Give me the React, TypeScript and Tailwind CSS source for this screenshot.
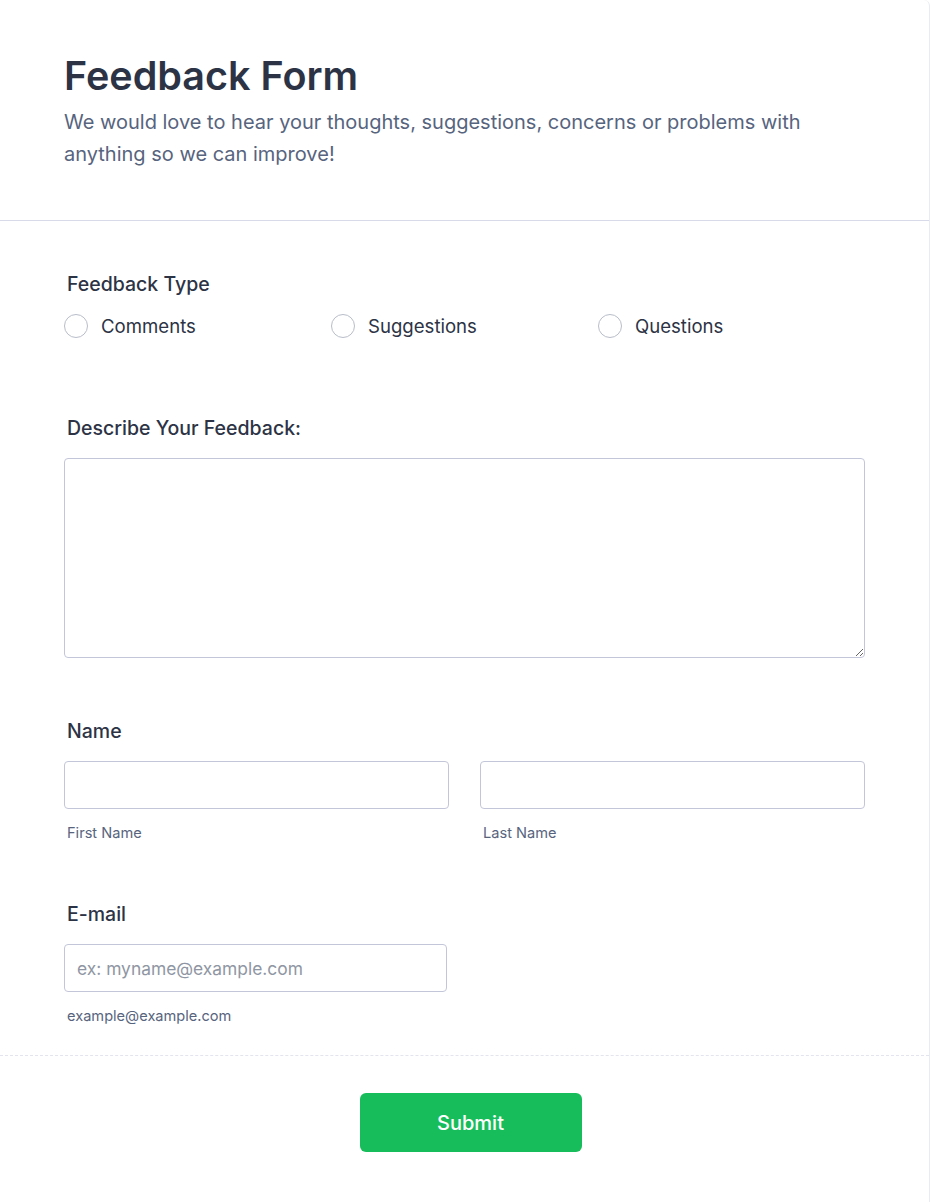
import React from 'react';

const font = { fontFamily: 'Inter, "Noto Sans", Arial, sans-serif' };

const feedbackTypes = ['Comments', 'Suggestions', 'Questions'];

function Label({ children, className = '' }: { children: React.ReactNode; className?: string }) {
  return (
    <div className={`pl-[3px] text-[19.5px] leading-6 font-medium text-[#2c3345] ${className}`}>
      {children}
    </div>
  );
}

function SubLabel({ children }: { children: React.ReactNode }) {
  return <div className="mt-[14px] pl-[3px] text-[14.6px] leading-5 text-[#57647e]">{children}</div>;
}

export default function App() {
  return (
    <div style={font} className="min-h-[1202px] w-full bg-white border-r border-[#e9ebf2] rounded-tr-md">
      {/* Header */}
      <div className="px-16 pt-[52px] pb-[50px] border-b border-[#d8dae9]">
        <h1 className="text-[39.5px] leading-[48px] font-semibold text-[#2c3345]">Feedback Form</h1>
        <p className="mt-[6px] text-[20px] leading-8 text-[#57647e]">
          We would love to hear your thoughts, suggestions, concerns or problems with anything so we can improve!
        </p>
      </div>

      <div className="px-16 pt-[51px]">
        {/* Feedback type */}
        <Label>Feedback Type</Label>
        <div className="mt-[18px] grid grid-cols-3">
          {feedbackTypes.map(t => (
            <label key={t} className="flex items-center gap-[13px] cursor-pointer">
              <span className="w-6 h-6 rounded-full border border-[#b8bdc9] bg-white flex-shrink-0" />
              <span className="text-[18.6px] leading-6 text-[#2c3345]">{t}</span>
            </label>
          ))}
        </div>

        {/* Describe */}
        <Label className="mt-[78px]">Describe Your Feedback:</Label>
        <textarea
          className="mt-[18px] block w-full h-[200px] rounded border border-[#c3c6d8] bg-white outline-none px-3 py-2 text-[18px]"
        />

        {/* Name */}
        <Label className="mt-[61px]">Name</Label>
        <div className="mt-[18px] grid grid-cols-2 gap-[31px]">
          <div>
            <input className="block w-full h-12 rounded border border-[#c3c6d8] bg-white outline-none px-3 text-[18px]" />
            <SubLabel>First Name</SubLabel>
          </div>
          <div>
            <input className="block w-full h-12 rounded border border-[#c3c6d8] bg-white outline-none px-3 text-[18px]" />
            <SubLabel>Last Name</SubLabel>
          </div>
        </div>

        {/* Email */}
        <Label className="mt-[59px]">E-mail</Label>
        <div className="mt-[18px] w-[383px]">
          <input
            placeholder="ex: myname@example.com"
            className="block w-full h-12 rounded border border-[#c3c6d8] bg-white outline-none px-3 text-[17.4px] text-[#2c3345] placeholder:text-[#8f96a3]"
          />
          <SubLabel>example@example.com</SubLabel>
        </div>
      </div>

      {/* Footer */}
      <div className="mt-[29px] border-t border-dashed border-[#e3e4ee] flex justify-center pt-[37px] pl-3">
        <button className="w-[222px] h-[59px] rounded-md bg-[#18bd5b] text-white text-[20px] font-medium">
          Submit
        </button>
      </div>
    </div>
  );
}
